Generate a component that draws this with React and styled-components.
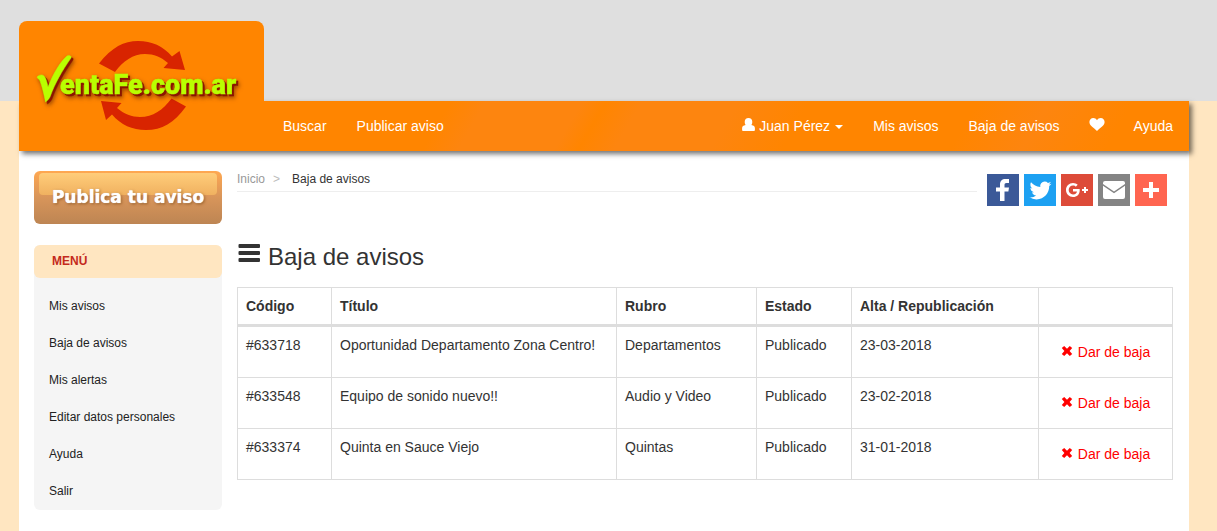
import React from "react";
import styled, { createGlobalStyle } from "styled-components";

const colors = {
  orange: "#ff8500",
  peach: "#ffe6c1",
  grey: "#dfdfdf",
  panel: "#f5f5f5",
  border: "#dddddd",
  text: "#333333",
  muted: "#999999",
  danger: "#ff0000",
  menuTitle: "#c42a1c",
  lime: "#b9ff00",
  arrows: "#d82400",
};

const GlobalStyle = createGlobalStyle`
  *, *::before, *::after {
    box-sizing: border-box;
  }

  body {
    margin: 0;
    font-family: "Liberation Sans", Arial, sans-serif;
    font-size: 14px;
    line-height: 20px;
    color: ${colors.text};
  }

  a {
    color: inherit;
    text-decoration: none;
  }
`

const Page = styled.div`
  display: flex;
  flex-direction: column;
  min-height: 100vh;
  padding: 101px 28px 0 19px;
  background: linear-gradient(${colors.grey} 101px, ${colors.peach} 101px);
`

const Header = styled.header`
  display: flex;
  align-items: flex-end;
  height: 50px;
  background: linear-gradient(
    120deg,
    ${colors.orange} 36%,
    #fd850f 39%,
    #fd850f 47%,
    ${colors.orange} 49%,
    #fd850f 52%,
    #fd850f 60%,
    ${colors.orange} 66%,
    ${colors.orange} 80%,
    #fd850f 86%,
    ${colors.orange} 93%
  );
  box-shadow: 3px 3px 5px rgba(0, 0, 0, 0.55);
  z-index: 1;
`

const LogoLink = styled.a`
  flex: none;
  width: 245px;
  height: 130px;
  margin-right: 4px;
  border-radius: 8px 8px 0 0;
  background: ${colors.orange};

  svg {
    display: block;
  }

  text {
    font-family: Roboto, "Liberation Sans", Arial, sans-serif;
    font-size: 27px;
    font-weight: 900;
  }

  .lettering {
    fill: ${colors.lime};
    stroke: ${colors.lime};
    filter: drop-shadow(2px 2px 0 #8a1500) drop-shadow(1px 2px 2px rgba(90, 30, 0, 0.6));
  }
`

const Nav = styled.nav`
  flex: 1;
  display: flex;
  justify-content: space-between;
  padding-right: 1px;
`

const NavGroup = styled.div`
  display: flex;
`

const NavLink = styled.a`
  display: flex;
  align-items: center;
  height: 50px;
  padding: 0 15px;
  color: #fff;
  white-space: nowrap;

  svg {
    margin-bottom: 4px;
  }
`

const UserName = styled.span`
  margin: 0 5px 0 4px;
`

const Caret = styled.span`
  margin-top: 2px;
  border-top: 4px solid #fff;
  border-left: 4px solid transparent;
  border-right: 4px solid transparent;
`

const Content = styled.div`
  flex: 1;
  display: grid;
  grid-template-columns: 188px minmax(0, 1fr);
  align-items: start;
  gap: 15px;
  padding: 20px 16px 20px 15px;
  background: #fff;
`

const PublishLink = styled.a`
  position: relative;
  display: flex;
  align-items: center;
  justify-content: center;
  height: 53px;
  padding-bottom: 1px;
  border-radius: 6px;
  background: linear-gradient(#ffa851, #d8955a 50%, #bd8553);
  color: #fff;
  font-family: "DejaVu Sans", Verdana, sans-serif;
  font-size: 17px;
  font-weight: bold;
  text-shadow: 0 0 1px #fff, 1px 1px 3px rgba(110, 60, 10, 0.7);
  white-space: nowrap;

  /* glossy strip behind the label */
  &::before {
    content: "";
    position: absolute;
    inset: 2px 5px auto;
    height: 22px;
    border-radius: 4px;
    background: linear-gradient(#ffcd7a, #f0b160);
  }

  span {
    position: relative;
  }
`

const Menu = styled.nav`
  margin-top: 21px;
  border-radius: 6px;
  background: ${colors.panel};
  font-size: 12px;
`

const MenuTitle = styled.h2`
  margin: 0;
  padding: 0 18px;
  border-radius: 6px;
  background: ${colors.peach};
  color: ${colors.menuTitle};
  font-size: 12px;
  line-height: 33px;
`

const MenuList = styled.ul`
  margin: 0;
  padding: 10px 0 0;
  list-style: none;

  a {
    display: block;
    padding: 0 15px;
    line-height: 37px;
    color: #222;
  }
`

const TopRow = styled.div`
  display: flex;
  align-items: flex-start;
  gap: 10px;
`

const Breadcrumb = styled.nav`
  flex: 1;
  display: flex;
  height: 21px;
  border-bottom: 1px solid #eee;
  font-size: 12px;
  line-height: 16px;

  a {
    color: ${colors.muted};
  }
`

const Separator = styled.span`
  margin: 0 12px 0 8px;
  color: #bbb;
`

const Share = styled.div`
  display: flex;
  gap: 5px;
  padding: 3px 6px 0 0;
`

const ShareLink = styled.a`
  width: 32px;
  height: 32px;
  background: ${({ $color }) => $color};

  svg {
    display: block;
  }
`

const Title = styled.h1`
  display: flex;
  gap: 7px;
  margin: 38px 0 17px;
  font-size: 24px;
  font-weight: normal;
  line-height: 26px;
`

const Table = styled.table`
  width: 100%;
  table-layout: fixed;
  border-collapse: collapse;

  th,
  td {
    padding: 8px;
    border: 1px solid ${colors.border};
    text-align: left;
    vertical-align: top;
  }

  th {
    border-bottom-width: 3px;
  }
`

const RemoveButton = styled.button`
  display: flex;
  align-items: center;
  gap: 5px;
  height: 34px;
  margin: 0 auto;
  padding: 0 12px;
  border: 0;
  background: none;
  color: ${colors.danger};
  font: inherit;
  white-space: nowrap;
  cursor: pointer;

  svg {
    margin-bottom: 2px;
  }
`

const Logo = () => (
  <svg width="245" height="130" viewBox="0 0 245 130" role="img" aria-label="VentaFe.com.ar">
    <g fill={colors.arrows}>
      <path d="M80 42.500C93 26 105 20 119 20C133 20 144 25 153 35.500L160.500 30L166 49L144.500 47L149 42C142 36 135 33 126 33C114 33 104 40 96 51Z" />
      <path d="M82 80L102.500 82L98 87C105 93 113 96 121 96C134 96 144 89 152.500 77.500L167 85.500C155 102 143 109 127 109C113 109 102 104 93 93.500L87 99Z" />
    </g>
    <g className="lettering">
      <path
        strokeWidth="0.5"
        d="M18 56C20 54 23 53 25 55C27 57 28 61 29 66C34 53 41 41 48 35C50 33.500 53 35 52 37C43 50 36 62 31 76C30 78 28 80 26.500 81C25 73 23 65 21 60C20 58 19 58 18 56Z"
      />
      <text x="41" y="73" strokeWidth="0.5">entaFe.com.ar</text>
    </g>
  </svg>
)

const UserIcon = () => (
  <svg width="13" height="13" viewBox="0 0 13 13" fill="#fff" aria-hidden="true">
    <path d="M6.500 0C8.900 0 10.300 1.700 10.300 3.900C10.300 5.100 10 6.100 9.400 6.900C11.700 7.200 12.900 8.400 12.900 10.200V12C12.900 12.600 12.600 12.900 12 12.900H1C0.400 12.900 0.100 12.600 0.100 12V10.200C0.100 8.400 1.300 7.200 3.600 6.900C3 6.100 2.700 5.100 2.700 3.900C2.700 1.700 4.100 0 6.500 0Z" />
  </svg>
)

const HeartIcon = () => (
  <svg width="14" height="13" viewBox="0 0 14 13" fill="#fff" overflow="visible" aria-hidden="true">
    <path d="M7 2.200C7.800 0.800 9.200 0 10.700 0C13 0 14.600 1.800 14.600 4C14.600 7.500 10.500 9.500 7 13C3.500 9.500 -0.600 7.500 -0.600 4C-0.600 1.800 1 0 3.300 0C4.800 0 6.200 0.800 7 2.200Z" />
  </svg>
)

const ListIcon = () => (
  <svg width="24" height="24" viewBox="0 0 24 24" fill={colors.text} aria-hidden="true">
    <rect x="1.500" y="0" width="21.500" height="4" rx="1" />
    <rect x="1.500" y="7" width="21.500" height="4" rx="1" />
    <rect x="1.500" y="14" width="21.500" height="4" rx="1" />
  </svg>
)

const RemoveIcon = () => (
  <svg width="12" height="12" viewBox="0 0 12 12" fill={colors.danger} aria-hidden="true">
    <path d="M3.200 1L6 3.800L8.800 1L11.200 3L8.600 6L11.200 9L8.800 11L6 8.200L3.200 11L0.800 9L3.400 6L0.800 3Z" />
  </svg>
)

const shareLinks = [
  {
    label: "Facebook",
    color: "#3b5998",
    path: "M13 27V17.500H9V13.500H13V10.500C13 7 15 5 18.500 5H22V9H19.500C18 9 17.500 9.700 17.500 11V13.500H22L21.400 17.500H17.500V27Z",
  },
  {
    label: "Twitter",
    color: "#1da1f2",
    viewBox: "-2 -2 35 35",
    path: "M28 8.557a9.913 9.913 0 0 1-2.828.775 4.930 4.930 0 0 0 2.166-2.725 9.738 9.738 0 0 1-3.130 1.194 4.920 4.920 0 0 0-3.593-1.550 4.924 4.924 0 0 0-4.794 6.049c-4.090-.210-7.720-2.170-10.150-5.150a4.942 4.942 0 0 0-.665 2.477c0 1.710.870 3.214 2.190 4.100a4.968 4.968 0 0 1-2.230-.616v.060c0 2.390 1.700 4.380 3.952 4.830-.414.115-.850.174-1.297.174-.318 0-.626-.030-.928-.086a4.935 4.935 0 0 0 4.600 3.420 9.893 9.893 0 0 1-6.114 2.107c-.398 0-.790-.023-1.175-.068a13.953 13.953 0 0 0 7.550 2.213c9.056 0 14.010-7.507 14.010-14.013 0-.213-.005-.426-.015-.637.960-.695 1.795-1.560 2.455-2.550z",
  },
  {
    label: "Google+",
    color: "#dd4b39",
    path: "M27 15h-2v-2h-2v2h-2v2h2v2h2v-2h2m-15-2v2.400h3.970c-.160 1.030-1.200 3.020-3.970 3.020-2.390 0-4.340-1.980-4.340-4.420s1.950-4.420 4.340-4.420c1.360 0 2.270.580 2.790 1.080l1.900-1.830C15.470 9.690 13.890 9 12 9c-3.870 0-7 3.130-7 7s3.130 7 7 7c4.040 0 6.720-2.840 6.720-6.840 0-.460-.050-.810-.110-1.160H12z",
  },
  {
    label: "Email",
    color: "#848484",
    path: "M5 9Q5 7 7 7H25Q27 7 27 9V10L16 17.500L5 10ZM5 11.800L16 19.300L27 11.800V23Q27 25 25 25H7Q5 25 5 23Z",
  },
  {
    label: "Compartir",
    color: "#ff6550",
    path: "M14 8H18V14H24V18H18V24H14V18H8V14H14Z",
  },
]

const menuItems = ["Mis avisos", "Baja de avisos", "Mis alertas", "Editar datos personales", "Ayuda", "Salir"]

const columns = [
  { title: "Código", width: 94 },
  { title: "Título", width: 285 },
  { title: "Rubro", width: 140 },
  { title: "Estado", width: 95 },
  { title: "Alta / Republicación", width: 187 },
  { title: "", width: 134 },
]

const ads = [
  { code: "#633718", title: "Oportunidad Departamento Zona Centro!", category: "Departamentos", status: "Publicado", date: "23-03-2018" },
  { code: "#633548", title: "Equipo de sonido nuevo!!", category: "Audio y Video", status: "Publicado", date: "23-02-2018" },
  { code: "#633374", title: "Quinta en Sauce Viejo", category: "Quintas", status: "Publicado", date: "31-01-2018" },
]

const AdsTable = ({ rows }) => (
  <Table>
    <colgroup>
      {columns.map(({ title, width }) => (
        <col key={title} width={width} />
      ))}
    </colgroup>
    <thead>
      <tr>
        {columns.map(({ title }) => (
          <th key={title} scope="col">{title}</th>
        ))}
      </tr>
    </thead>
    <tbody>
      {rows.map((ad) => (
        <tr key={ad.code}>
          <td>{ad.code}</td>
          <td>{ad.title}</td>
          <td>{ad.category}</td>
          <td>{ad.status}</td>
          <td>{ad.date}</td>
          <td>
            <RemoveButton type="button">
              <RemoveIcon />
              Dar de baja
            </RemoveButton>
          </td>
        </tr>
      ))}
    </tbody>
  </Table>
)

const App = () => {
  return (
    <>
      <GlobalStyle />
      <Page>
        <Header>
          <LogoLink href="#">
            <Logo />
          </LogoLink>
          <Nav>
            <NavGroup>
              <NavLink href="#">Buscar</NavLink>
              <NavLink href="#">Publicar aviso</NavLink>
            </NavGroup>
            <NavGroup>
              <NavLink href="#">
                <UserIcon />
                <UserName>Juan Pérez</UserName>
                <Caret />
              </NavLink>
              <NavLink href="#">Mis avisos</NavLink>
              <NavLink href="#">Baja de avisos</NavLink>
              <NavLink href="#" aria-label="Favoritos">
                <HeartIcon />
              </NavLink>
              <NavLink href="#">Ayuda</NavLink>
            </NavGroup>
          </Nav>
        </Header>
        <Content>
          <aside>
            <PublishLink href="#">
              <span>Publica tu aviso</span>
            </PublishLink>
            <Menu>
              <MenuTitle>MENÚ</MenuTitle>
              <MenuList>
                {menuItems.map((item) => (
                  <li key={item}>
                    <a href="#">{item}</a>
                  </li>
                ))}
              </MenuList>
            </Menu>
          </aside>
          <main>
            <TopRow>
              <Breadcrumb>
                <a href="#">Inicio</a>
                <Separator>&gt;</Separator>
                <span>Baja de avisos</span>
              </Breadcrumb>
              <Share>
                {shareLinks.map(({ label, color, path, viewBox = "0 0 32 32" }) => (
                  <ShareLink key={label} href="#" aria-label={label} $color={color}>
                    <svg width="32" height="32" viewBox={viewBox} fill="#fff" aria-hidden="true">
                      <path d={path} />
                    </svg>
                  </ShareLink>
                ))}
              </Share>
            </TopRow>
            <Title>
              <ListIcon />
              Baja de avisos
            </Title>
            <AdsTable rows={ads} />
          </main>
        </Content>
      </Page>
    </>
  )
}

export default App
